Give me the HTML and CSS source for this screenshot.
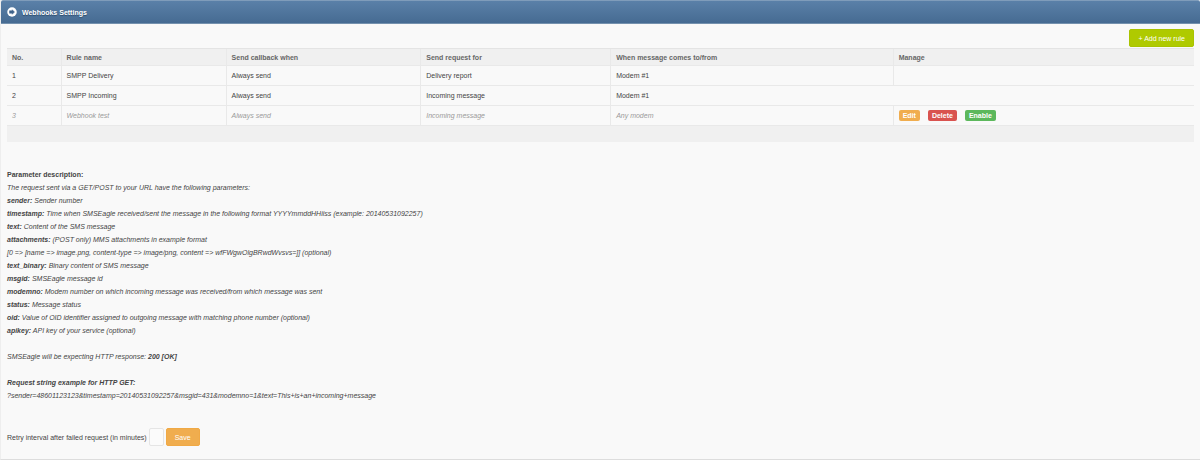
FILE: index.html
```html
<!DOCTYPE html>
<html lang="en">
<head>
    <meta charset="UTF-8">
    <title>Webhooks Settings</title>
    <link rel="stylesheet" href="styles.css">
</head>
<body>

    <div class="panel">
        <header class="panel-header">
            <svg class="panel-icon" viewBox="0 0 20 20" aria-hidden="true">
                <circle cx="10" cy="10" r="9.5" fill="#fff"/>
                <path d="M5 7.5h5.5V5.5l4.5 4.5-4.5 4.5v-2H5z" fill="#3f638b" stroke="#3f638b" stroke-linejoin="round"/>
            </svg>
            <h1>Webhooks Settings</h1>
        </header>

        <div class="panel-body">
            <div class="toolbar">
                <button type="button" class="btn btn-add">+ Add new rule</button>
            </div>

            <table class="rules">
                <colgroup>
                    <col class="col-no">
                    <col class="col-name">
                    <col class="col-when">
                    <col class="col-request">
                    <col class="col-modem">
                    <col class="col-manage">
                </colgroup>
                <thead>
                    <tr>
                        <th>No.</th>
                        <th>Rule name</th>
                        <th>Send callback when</th>
                        <th>Send request for</th>
                        <th>When message comes to/from</th>
                        <th>Manage</th>
                    </tr>
                </thead>
                <tbody>
                    <tr>
                        <td>1</td>
                        <td>SMPP Delivery</td>
                        <td>Always send</td>
                        <td>Delivery report</td>
                        <td>Modem #1</td>
                        <td></td>
                    </tr>
                    <tr class="no-lines">
                        <td>2</td>
                        <td>SMPP Incoming</td>
                        <td>Always send</td>
                        <td>Incoming message</td>
                        <td>Modem #1</td>
                        <td></td>
                    </tr>
                    <tr class="disabled">
                        <td>3</td>
                        <td>Webhook test</td>
                        <td>Always send</td>
                        <td>Incoming message</td>
                        <td>Any modem</td>
                        <td class="manage">
                            <div class="actions">
                                <button type="button" class="label label-edit">Edit</button>
                                <button type="button" class="label label-delete">Delete</button>
                                <button type="button" class="label label-enable">Enable</button>
                            </div>
                        </td>
                    </tr>
                </tbody>
                <tfoot>
                    <tr>
                        <td colspan="6"></td>
                    </tr>
                </tfoot>
            </table>

            <div class="description">
                <h2>Parameter description:</h2>
                <p>The request sent via a GET/POST to your URL have the following parameters:</p>
                <p><b>sender:</b> Sender number</p>
                <p><b>timestamp:</b> Time when SMSEagle received/sent the message in the following format YYYYmmddHHiiss (example: 20140531092257)</p>
                <p><b>text:</b> Content of the SMS message</p>
                <p><b>attachments:</b> (POST only) MMS attachments in example format</p>
                <p>[0 =&gt; [name =&gt; image.png, content-type =&gt; image/png, content =&gt; wfFWgwOlgBRwdWvsvs=]] (optional)</p>
                <p><b>text_binary:</b> Binary content of SMS message</p>
                <p><b>msgid:</b> SMSEagle message id</p>
                <p><b>modemno:</b> Modem number on which incoming message was received/from which message was sent</p>
                <p><b>status:</b> Message status</p>
                <p><b>oid:</b> Value of OID identifier assigned to outgoing message with matching phone number (optional)</p>
                <p><b>apikey:</b> API key of your service (optional)</p>
                <p class="spaced">SMSEagle will be expecting HTTP response: <b>200 [OK]</b></p>
                <p class="spaced"><b>Request string example for HTTP GET:</b></p>
                <p>?sender=48601123123&amp;timestamp=20140531092257&amp;msgid=431&amp;modemno=1&amp;text=This+is+an+incoming+message</p>
            </div>

            <form class="retry">
                <label for="retry">Retry interval after failed request (in minutes)</label>
                <input type="text" id="retry">
                <button type="button" class="btn btn-save">Save</button>
            </form>
        </div>
    </div>

</body>
</html>
```

FILE: styles.css
```css
* {
    box-sizing: border-box;
}
body {
    margin: 0;
    font-family: "Liberation Sans", Arial, sans-serif;
    font-size: 7px;
    line-height: 13px;
    color: #444;
    background-color: #f9f9f9;
}
h1, h2, p {
    margin: 0;
    font-size: 7px;
}
button, input {
    font-family: inherit;
    font-size: 7px;
}
button {
    cursor: pointer;
}
.panel {
    border-left: 1px solid #eee;
    border-bottom: 1px solid #ddd;
}
.panel-header {
    display: flex;
    align-items: center;
    gap: 5px;
    height: 24px;
    padding: 0 6px;
    color: #fff;
    background: linear-gradient(#5a80a8, #466b92);
    border-top: 1px solid #7f9cba;
    border-bottom: 1px solid #7491ae;
    border-radius: 2px 2px 0 0;
}
.panel-header h1 {
    text-shadow: 0 1px 1px #2c4a69;
}
.panel-icon {
    width: 10px;
    height: 10px;
}
.panel-body {
    padding: 5px 6px 13px;
}
.toolbar {
    display: flex;
    justify-content: flex-end;
    margin-bottom: 1px;
}
.btn {
    height: 18px;
    padding: 0 8px;
    border: 1px solid;
    border-radius: 2px;
    color: #fff;
}
.btn-add {
    background-color: #afca00;
    border-color: #a9c300;
}
.btn-save {
    background-color: #f0ad4e;
    border-color: #f0a945;
}
.rules {
    width: 100%;
    table-layout: fixed;
    border-collapse: separate;
    border-spacing: 0;
    border-top: 1px solid #e4e4e4;
}
.col-no { width: 4.6%; }
.col-name { width: 13.9%; }
.col-when { width: 16.4%; }
.col-request { width: 16%; }
.col-modem { width: 23.8%; }
.rules th,
.rules td {
    padding: 0 5px;
    text-align: left;
    border-bottom: 1px solid #e9e9e9;
    border-right: 1px solid #e9e9e9;
}
.rules th:last-child,
.rules td:last-child,
.rules .no-lines td:nth-child(5) {
    border-right: none;
}
.rules th {
    height: 17px;
    color: #666;
    background-color: #f0f0f0;
}
.rules td {
    height: 20px;
}
.rules .disabled td {
    color: #999;
    font-style: italic;
}
.rules tfoot td {
    height: 16px;
    background-color: #f0f0f0;
    border: none;
}
.actions {
    display: flex;
    gap: 8px;
}
.label {
    height: 11px;
    padding: 0 4px;
    border: none;
    border-radius: 2px;
    color: #fff;
    font-weight: bold;
    line-height: 11px;
}
.label-edit { background-color: #f0ad4e; }
.label-delete { background-color: #d9534f; }
.label-enable { background-color: #5cb85c; }
.description {
    margin-top: 26px;
}
.description p {
    font-style: italic;
}
.description .spaced {
    margin-top: 13px;
}
.retry {
    display: flex;
    align-items: center;
    gap: 2px;
    margin-top: 26px;
}
.retry input {
    width: 15px;
    height: 18px;
    padding: 0 2px;
    border: 1px solid #e5e5e5;
    border-radius: 2px;
    background-color: #fbfbfb;
}
```
